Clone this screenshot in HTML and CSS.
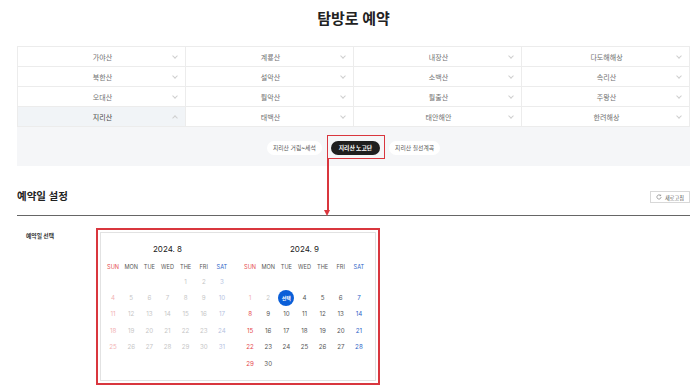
FILE: index.html
```html
<!DOCTYPE html>
<html lang="ko">
  <head>
    <meta charset="UTF-8" />
    <meta name="viewport" content="width=device-width, initial-scale=1.0" />
    <title>탐방로 예약</title>
    <link rel="stylesheet" href="styles.css">
  </head>
  <body>
    <div class="page">
      <h1 class="title">탐방로 예약</h1>

      <!-- 국립공원 목록 -->
      <ul class="park-list">
        <li class="park"><span class="park-name">가야산</span><i class="chev"></i></li>
        <li class="park"><span class="park-name">계룡산</span><i class="chev"></i></li>
        <li class="park"><span class="park-name">내장산</span><i class="chev"></i></li>
        <li class="park"><span class="park-name">다도해해상</span><i class="chev"></i></li>
        <li class="park"><span class="park-name">북한산</span><i class="chev"></i></li>
        <li class="park"><span class="park-name">설악산</span><i class="chev"></i></li>
        <li class="park"><span class="park-name">소백산</span><i class="chev"></i></li>
        <li class="park"><span class="park-name">속리산</span><i class="chev"></i></li>
        <li class="park"><span class="park-name">오대산</span><i class="chev"></i></li>
        <li class="park"><span class="park-name">월악산</span><i class="chev"></i></li>
        <li class="park"><span class="park-name">월출산</span><i class="chev"></i></li>
        <li class="park"><span class="park-name">주왕산</span><i class="chev"></i></li>
        <li class="park on"><span class="park-name">지리산</span><i class="chev up"></i></li>
        <li class="park"><span class="park-name">태백산</span><i class="chev"></i></li>
        <li class="park"><span class="park-name">태안해안</span><i class="chev"></i></li>
        <li class="park"><span class="park-name">한려해상</span><i class="chev"></i></li>
      </ul>

      <!-- 탐방로 선택 -->
      <div class="trail-tabs">
        <button type="button" class="trail">지리산 거림~세석</button>
        <button type="button" class="trail active">지리산 노고단</button>
        <button type="button" class="trail">지리산 칠선계곡</button>
      </div>

      <div class="section-head">
        <h2 class="section-title">예약일 설정</h2>
        <button type="button" class="refresh">
          <svg width="6" height="6" viewBox="0 0 10 10"><path d="M8.5 5a3.5 3.5 0 1 1-1-2.5M7.8 1v1.8H6" fill="none" stroke="#777" stroke-width="1.1"/></svg>
          새로고침
        </button>
      </div>

      <div class="field">
        <div class="field-label">예약일 선택</div>
        <div class="mark-box">
          <div class="calendar">
            <div class="month">
              <div class="month-title">2024. 8</div>
              <div class="week">
                <span class="sun">SUN</span><span>MON</span><span>TUE</span><span>WED</span><span>THE</span><span>FRI</span><span class="sat">SAT</span>
              </div>
              <div class="days">
                <span></span><span></span><span></span><span></span>
                <span class="past">1</span><span class="past">2</span><span class="past sat">3</span>
                <span class="past sun">4</span><span class="past">5</span><span class="past">6</span><span class="past">7</span><span class="past">8</span><span class="past">9</span><span class="past sat">10</span>
                <span class="past sun">11</span><span class="past">12</span><span class="past">13</span><span class="past">14</span><span class="past">15</span><span class="past">16</span><span class="past sat">17</span>
                <span class="past sun">18</span><span class="past">19</span><span class="past">20</span><span class="past">21</span><span class="past">22</span><span class="past">23</span><span class="past sat">24</span>
                <span class="past sun">25</span><span class="past">26</span><span class="past">27</span><span class="past">28</span><span class="past">29</span><span class="past">30</span><span class="past sat">31</span>
              </div>
            </div>
            <div class="month">
              <div class="month-title">2024. 9</div>
              <div class="week">
                <span class="sun">SUN</span><span>MON</span><span>TUE</span><span>WED</span><span>THE</span><span>FRI</span><span class="sat">SAT</span>
              </div>
              <div class="days">
                <span></span><span></span><span></span><span></span><span></span><span></span><span></span>
                <span class="past sun">1</span><span class="past">2</span><span class="sel"><b>선택</b></span><span>4</span><span>5</span><span>6</span><span class="sat">7</span>
                <span class="sun">8</span><span>9</span><span>10</span><span>11</span><span>12</span><span>13</span><span class="sat">14</span>
                <span class="sun">15</span><span>16</span><span>17</span><span>18</span><span>19</span><span>20</span><span class="sat">21</span>
                <span class="sun">22</span><span>23</span><span>24</span><span>25</span><span>26</span><span>27</span><span class="sat">28</span>
                <span class="sun">29</span><span>30</span>
              </div>
            </div>
          </div>
        </div>
      </div>

      <!-- 안내 표시 (빨간 박스 + 화살표) -->
      <div class="mark-tab"></div>
      <div class="mark-arrow"></div>
    </div>
  </body>
</html>
```

FILE: styles.css
```css
*{
  box-sizing:border-box;
}

body{
  margin:0;
  font-family:Inter, "Noto Sans CJK KR", sans-serif;
  color:#222;
  background:#fff;
}

ul{
  margin:0;
  padding:0;
  list-style:none;
}

button{
  font-family:inherit;
  cursor:pointer;
}

.page{
  position:relative;
  width:673px;
  margin-left:17px;
}

.title{
  margin:0 0 16px;
  padding-top:8px;
  height:30px;
  line-height:22px;
  font-size:15px;
  font-weight:700;
  text-align:center;
}

/* 국립공원 목록 */
.park-list{
  display:grid;
  grid-template-columns:repeat(4, 1fr);
  border-top:1px solid #ececec;
  border-left:1px solid #ececec;
}

.park{
  height:20px;
  display:flex;
  align-items:center;
  padding:0 8px 0 14px;
  border-right:1px solid #ececec;
  border-bottom:1px solid #ececec;
  font-size:7px;
  color:#707070;
}

.park.on{
  background:#f1f4f7;
  color:#444;
}

.park-name{
  flex:1;
  text-align:center;
}

.chev{
  width:4px;
  height:4px;
  border-right:1px solid #cfcfcf;
  border-bottom:1px solid #cfcfcf;
  transform:translateY(-1px) rotate(45deg);
}

.chev.up{
  transform:translateY(1px) rotate(-135deg);
}

/* 탐방로 탭 */
.trail-tabs{
  height:39px;
  padding-top:3px;
  background:#f5f6f8;
  display:flex;
  justify-content:center;
  align-items:center;
  gap:9px;
}

.trail{
  height:14px;
  padding:0 6px;
  border:0;
  border-radius:7px;
  background:#fff;
  font-size:5.8px;
  line-height:14px;
  color:#555;
}

.trail.active{
  padding:0 8px;
  background:#1f1f1f;
  color:#fff;
  font-weight:700;
}

/* 예약일 설정 */
.section-head{
  margin-top:21px;
  padding-bottom:8px;
  display:flex;
  justify-content:space-between;
  align-items:center;
  border-bottom:1px solid #666;
}

.section-title{
  margin:0;
  line-height:20px;
  font-size:10.5px;
  font-weight:700;
}

.refresh{
  height:12px;
  padding:0 5px;
  display:flex;
  align-items:center;
  gap:3px;
  border:1px solid #d8d8d8;
  background:#fff;
  font-size:5.2px;
  color:#555;
}

.field{
  display:flex;
  margin-top:12px;
}

.field-label{
  width:79px;
  padding:3px 0 0 9px;
  font-size:5.8px;
  font-weight:700;
  color:#333;
}

.mark-box{
  border:2px solid #d9363e;
  padding:2px;
}

.calendar{
  display:flex;
  gap:10px;
  width:276px;
  padding:9px 7px 9px 3px;
  border:1px solid #e2e2e2;
}

.month{
  width:127px;
}

.month-title{
  height:14px;
  margin-bottom:5px;
  line-height:14px;
  font-size:8px;
  font-weight:400;
  text-align:center;
  color:#222;
}

.week,
.days{
  display:grid;
  grid-template-columns:repeat(7, 1fr);
  text-align:center;
}

.week{
  height:12px;
  line-height:12px;
  font-size:5.6px;
  color:#555;
}

.days{
  grid-auto-rows:16.4px;
  font-size:6.2px;
  color:#555;
}

.days span{
  display:flex;
  justify-content:center;
  align-items:center;
}

.sun{
  color:#e5484d;
}

.sat{
  color:#2c64c8;
}

.days .past{
  color:#c6c6c6;
}

.days .past.sun{
  color:#f2b2b4;
}

.days .past.sat{
  color:#b5c3df;
}

.days .sel b{
  width:16px;
  height:16px;
  display:flex;
  justify-content:center;
  align-items:center;
  border-radius:50%;
  background:#0b5fd8;
  color:#fff;
  font-size:5px;
  font-weight:700;
}

/* 안내 표시 */
.mark-tab{
  position:absolute;
  left:310px;
  top:135px;
  width:58px;
  height:24px;
  border:1.5px solid #d9363e;
}

.mark-arrow{
  position:absolute;
  left:310px;
  top:159px;
  width:1.5px;
  height:51px;
  background:#d9363e;
}

.mark-arrow:after{
  content:'';
  position:absolute;
  left:-3px;
  bottom:-6px;
  border-left:3.75px solid transparent;
  border-right:3.75px solid transparent;
  border-top:6px solid #d9363e;
}
```
